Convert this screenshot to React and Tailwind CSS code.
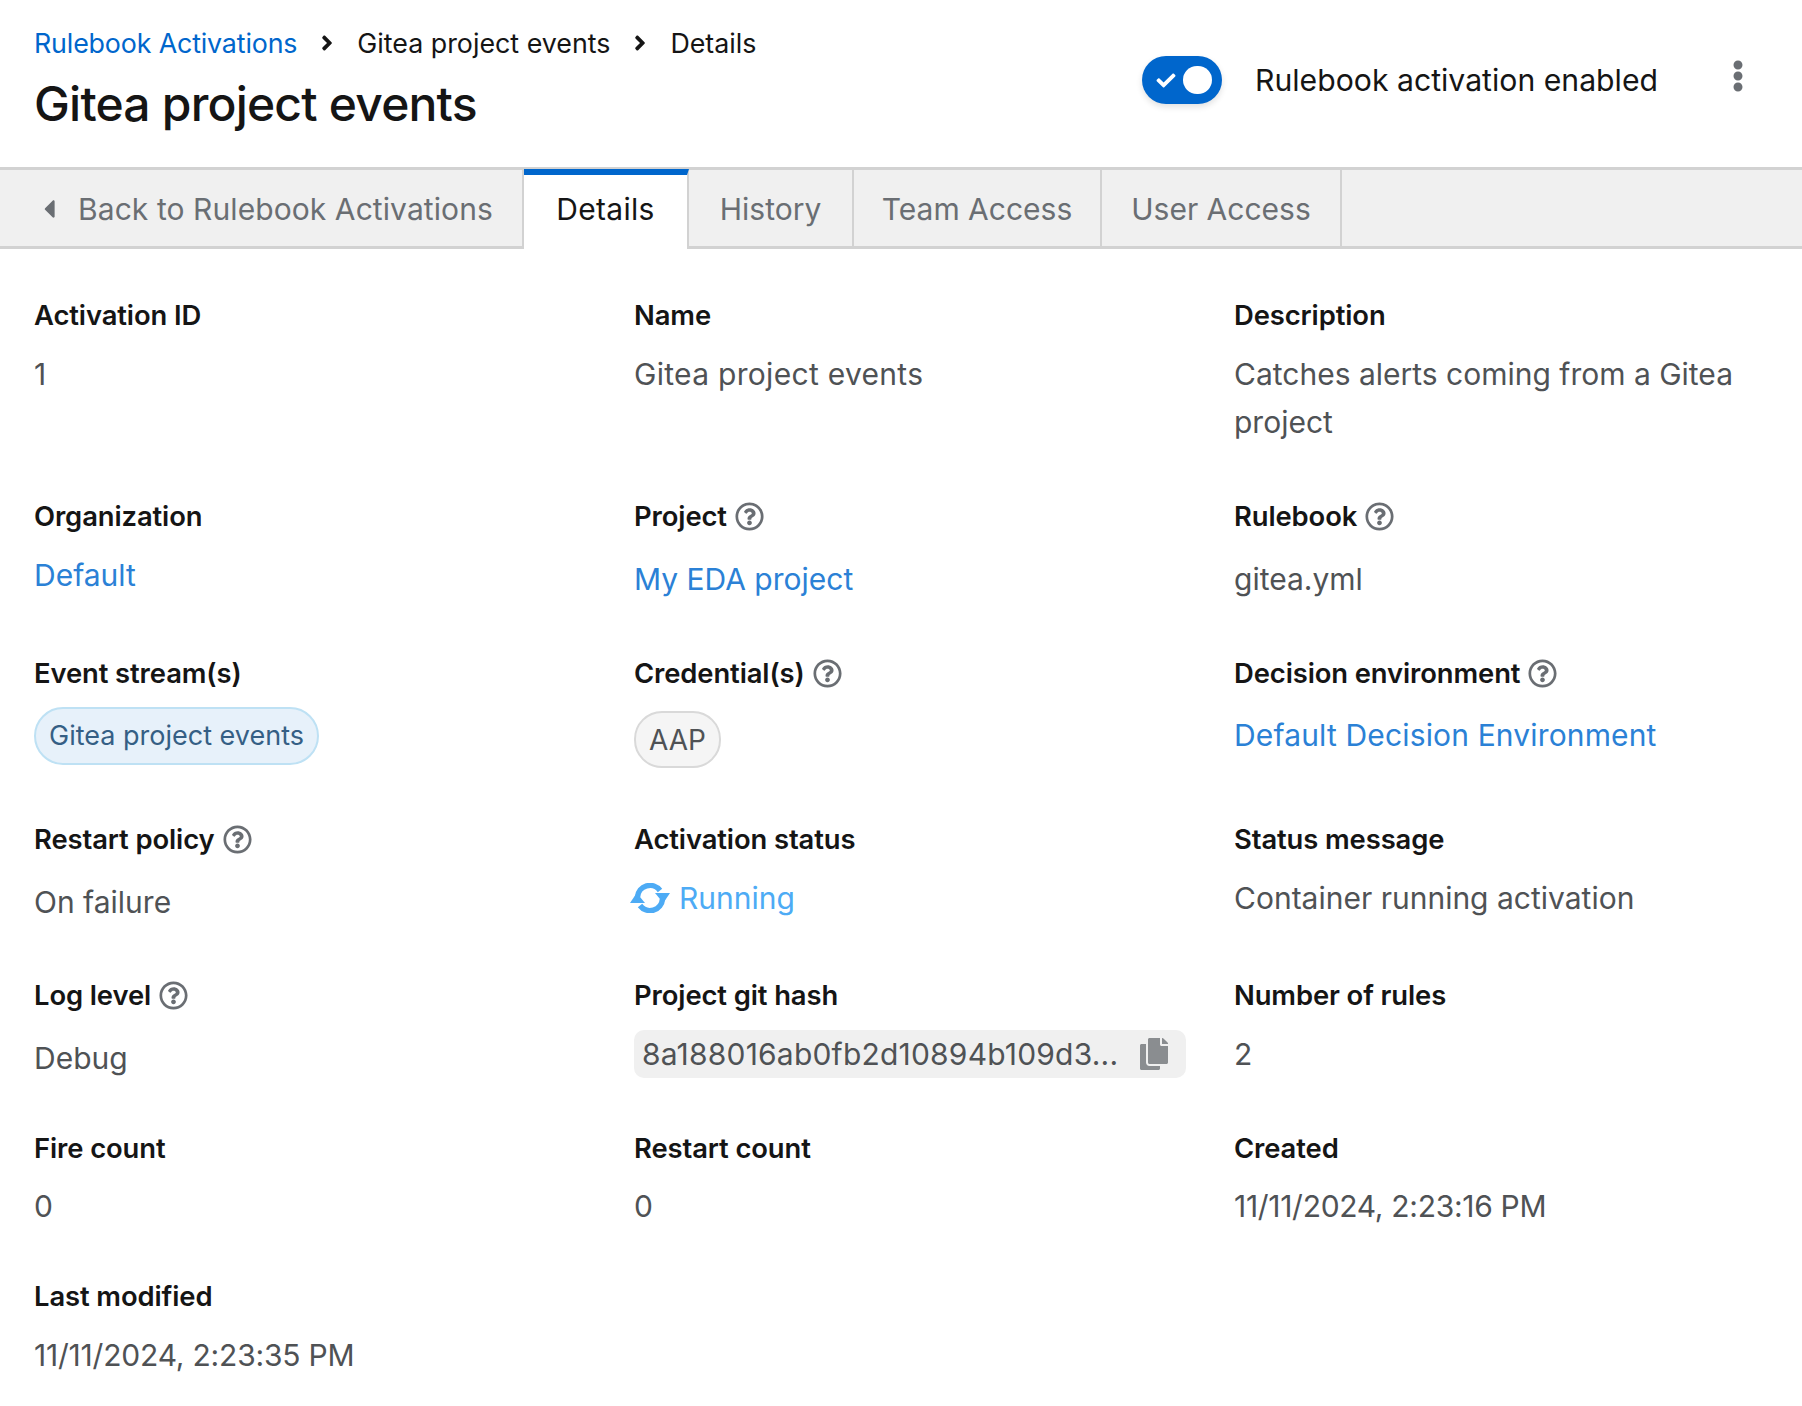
import React from "react";
import { FaAngleRight, FaCaretLeft, FaEllipsisV, FaCheck, FaCopy, FaRegQuestionCircle } from "react-icons/fa";

function Label({ children, help }) {
  return (
    <div className="flex items-center h-[36px] text-[27.4px] tracking-[-0.1px] font-semibold text-[#151515]">
      <span>{children}</span>
      {help && <FaRegQuestionCircle className="ml-[8px] -mt-[2px] text-[#6a6e73] w-[29px] h-[29px]" />}
    </div>
  );
}

function Detail({ label, help, className = "", children }) {
  return (
    <div className={className}>
      <Label help={help}>{label}</Label>
      {children}
    </div>
  );
}

function Value({ children, className = "", color = "text-[#4f5255]" }) {
  return <div className={`${color} text-[30px] leading-[48px] ${className}`}>{children}</div>;
}

// two arcs with outward arrow heads, same as the running status icon
function RunningIcon() {
  return (
    <svg viewBox="0 0 40 30" className="w-[40px] h-[30px]" fill="none">
      <path d="M7.5 14 A12.5 12.5 0 0 1 30 7.5" stroke="currentColor" strokeWidth="5.5" />
      <path d="M32.5 16 A12.5 12.5 0 0 1 10 22.5" stroke="currentColor" strokeWidth="5.5" />
      <polygon points="25,10 40,10 33.3,20" fill="currentColor" />
      <polygon points="0,20 15,20 6.7,10" fill="currentColor" />
    </svg>
  );
}

const tabs = [
  { label: "History", w: "w-[165px]" },
  { label: "Team Access", w: "w-[248px]" },
  { label: "User Access", w: "w-[240px]" },
];

const linkColor = "text-[#2b81d6]";

export default function App() {
  return (
    <div className="w-[1802px] h-[1406px] bg-white font-['Inter',sans-serif] overflow-hidden">
      <header className="h-[167px] flex justify-between pl-[34px] pr-[52px]">
        <div className="pt-[23px]">
          <nav className="flex items-center h-[40px] text-[26.8px] text-[#151515]">
            <span className="text-[#0066cc] tracking-[-0.15px]">Rulebook Activations</span>
            <FaAngleRight className="mx-[21px] w-[18px] h-[24px]" />
            <span>Gitea project events</span>
            <FaAngleRight className="mx-[21px] w-[18px] h-[24px]" />
            <span>Details</span>
          </nav>
          <h1 className="mt-[10px] text-[48px] tracking-[-0.8px] leading-[62px] font-medium text-[#151515]">Gitea project events</h1>
        </div>
        <div className="flex items-start pt-[56px]">
          <div className="relative w-[80px] h-[48px] rounded-full bg-[#0066cc] shadow-[0_3px_6px_rgba(0,0,0,0.12)]">
            <FaCheck className="absolute left-[13px] top-[15px] w-[22px] h-[19px] text-white" />
            <div className="absolute left-[41px] top-[10px] w-[29px] h-[28px] rounded-full bg-white" />
          </div>
          <span className="ml-[33px] h-[48px] pt-[2px] flex items-center text-[30.2px] text-[#151515]">Rulebook activation enabled</span>
          <FaEllipsisV className="ml-[68px] mt-[4px] w-[24px] h-[32px] text-[#6a6e73]" />
        </div>
      </header>

      <div className="flex h-[82px] bg-[#f0f0f0] border-t-[3px] border-b-[3px] border-[#d2d2d2]">
        <div className="w-[524px] flex items-center pt-[2px] text-[30px] text-[#6a6e73] border-r-2 border-[#d2d2d2]">
          <FaCaretLeft className="ml-[39px] w-[20px] h-[30px]" />
          <span className="ml-[19px] tracking-[0.08px]">Back to Rulebook Activations</span>
        </div>
        <div className="w-[165px] -mt-[1px] -mb-[3px] bg-white border-t-[6px] border-[#0066cc] border-r-2 border-r-[#d2d2d2] flex items-center justify-center pb-[5px] text-[30px] tracking-[0.3px] text-[#151515]">
          Details
        </div>
        {tabs.map((tab) => (
          <div key={tab.label} className={`${tab.w} flex items-center justify-center pt-[2px] text-[30px] text-[#6a6e73] border-r-2 border-[#d2d2d2]`}>
            {tab.label}
          </div>
        ))}
      </div>

      <div className="grid grid-cols-[552px_552px_552px] gap-x-[48px] pl-[34px] pt-[49px]">
        <Detail label="Activation ID"><Value className="mt-[16px]">1</Value></Detail>
        <Detail label="Name"><Value className="mt-[16px] tracking-[0.3px]">Gitea project events</Value></Detail>
        <Detail label="Description" className="h-[201px]"><Value className="mt-[16px]">Catches alerts coming from a Gitea project</Value></Detail>

        <Detail label="Organization"><Value className="mt-[16px]" color={linkColor}>Default</Value></Detail>
        <Detail label="Project" help><Value className="mt-[20px]" color={linkColor}>My EDA project</Value></Detail>
        <Detail label="Rulebook" help className="h-[157px]"><Value className="mt-[20px]">gitea.yml</Value></Detail>

        <Detail label="Event stream(s)">
          <span className="mt-[15px] inline-flex items-center h-[58px] px-[13px] rounded-[29px] bg-[#e7f1fa] border-2 border-[#bee1f4] text-[27px] text-[#355f85]">Gitea project events</span>
        </Detail>
        <Detail label="Credential(s)" help>
          <span className="mt-[19px] inline-flex items-center h-[57px] px-[13px] rounded-[28px] bg-[#f5f5f5] border-2 border-[#d9d9d9] text-[28px] text-[#4f5255]">AAP</span>
        </Detail>
        <Detail label="Decision environment" help className="h-[166px]"><Value className="mt-[19px] tracking-[0.15px]" color={linkColor}>Default Decision Environment</Value></Detail>

        <Detail label="Restart policy" help><Value className="mt-[20px]">On failure</Value></Detail>
        <Detail label="Activation status">
          <div className="mt-[16px] flex items-center h-[48px] -ml-[4px] text-[30px] text-[#4dabf5]">
            <RunningIcon />
            <span className="ml-[9px]">Running</span>
          </div>
        </Detail>
        <Detail label="Status message" className="h-[156px]"><Value className="mt-[16px]">Container running activation</Value></Detail>

        <Detail label="Log level" help><Value className="mt-[20px]">Debug</Value></Detail>
        <Detail label="Project git hash">
          <div className="mt-[16px] flex items-center justify-between h-[48px] pl-[8px] pr-[18px] rounded-[10px] bg-[#f0f0f0] text-[30px] tracking-[0.2px] text-[#4f5255]">
            <span>8a188016ab0fb2d10894b109d3...</span>
            <FaCopy className="w-[28px] h-[32px] text-[#8a8d90]" />
          </div>
        </Detail>
        <Detail label="Number of rules" className="h-[153px]"><Value className="mt-[16px]">2</Value></Detail>

        <Detail label="Fire count"><Value className="mt-[15px]">0</Value></Detail>
        <Detail label="Restart count"><Value className="mt-[15px]">0</Value></Detail>
        <Detail label="Created" className="h-[148px]"><Value className="mt-[15px] tracking-[-0.3px]">11/11/2024, 2:23:16 PM</Value></Detail>

        <Detail label="Last modified"><Value className="mt-[16px] tracking-[-0.2px]">11/11/2024, 2:23:35 PM</Value></Detail>
      </div>
    </div>
  );
}
